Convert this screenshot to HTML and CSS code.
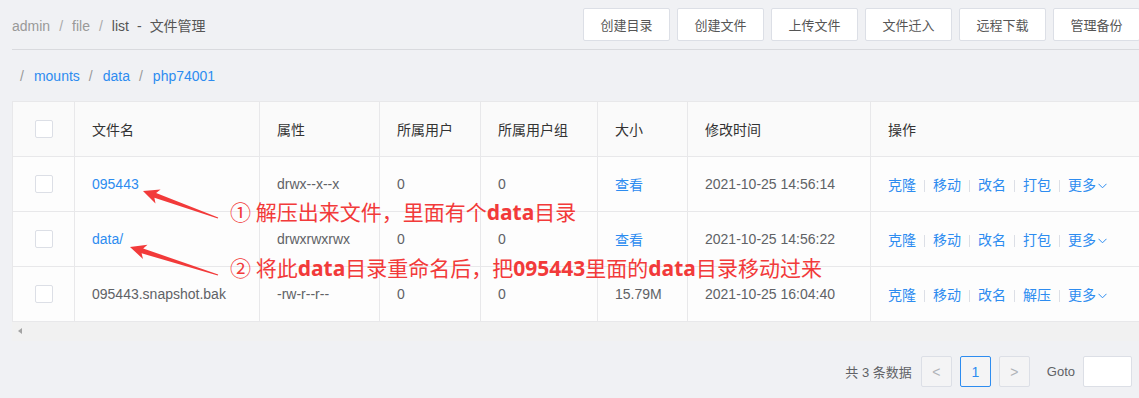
FILE: index.html
```html
<!DOCTYPE html>
<html lang="zh-CN">
<head>
  <meta charset="UTF-8" />
  <title>文件管理</title>
  <link rel="stylesheet" href="styles.css">
</head>
<body>
<div class="page">

  <header class="topbar">
    <div class="crumbs">
      <span class="muted">admin</span><span class="sep">/</span>
      <span class="muted">file</span><span class="sep">/</span>
      <span>list</span><span class="dash">-</span><span>文件管理</span>
    </div>
    <div class="actions">
      <button>创建目录</button>
      <button>创建文件</button>
      <button>上传文件</button>
      <button>文件迁入</button>
      <button>远程下载</button>
      <button>管理备份</button>
    </div>
  </header>

  <nav class="path">
    <span class="sep">/</span><a>mounts</a>
    <span class="sep">/</span><a>data</a>
    <span class="sep">/</span><a>php74001</a>
  </nav>

  <div class="table-wrap">
    <table class="files">
      <colgroup>
        <col style="width:62px"><col style="width:185px"><col style="width:120px"><col style="width:101px">
        <col style="width:117px"><col style="width:90px"><col style="width:183px"><col style="width:330px">
      </colgroup>
      <thead>
        <tr>
          <th class="chk"><span class="box"></span></th>
          <th>文件名</th><th>属性</th><th>所属用户</th><th>所属用户组</th>
          <th>大小</th><th>修改时间</th><th>操作</th>
        </tr>
      </thead>
      <tbody>
        <tr>
          <td class="chk"><span class="box"></span></td>
          <td><a>095443</a></td><td>drwx--x--x</td><td>0</td><td>0</td>
          <td><a>查看</a></td><td>2021-10-25 14:56:14</td>
          <td class="ops"><a>克隆</a><i></i><a>移动</a><i></i><a>改名</a><i></i><a>打包</a><i></i><a class="more">更多<svg width="9" height="6" viewBox="0 0 9 6"><polyline points="0.5,0.8 4.5,4.8 8.5,0.8" fill="none" stroke="#2d8cf0" stroke-width="1"/></svg></a></td>
        </tr>
        <tr>
          <td class="chk"><span class="box"></span></td>
          <td><a>data/</a></td><td>drwxrwxrwx</td><td>0</td><td>0</td>
          <td><a>查看</a></td><td>2021-10-25 14:56:22</td>
          <td class="ops"><a>克隆</a><i></i><a>移动</a><i></i><a>改名</a><i></i><a>打包</a><i></i><a class="more">更多<svg width="9" height="6" viewBox="0 0 9 6"><polyline points="0.5,0.8 4.5,4.8 8.5,0.8" fill="none" stroke="#2d8cf0" stroke-width="1"/></svg></a></td>
        </tr>
        <tr>
          <td class="chk"><span class="box"></span></td>
          <td>095443.snapshot.bak</td><td>-rw-r--r--</td><td>0</td><td>0</td>
          <td>15.79M</td><td>2021-10-25 16:04:40</td>
          <td class="ops"><a>克隆</a><i></i><a>移动</a><i></i><a>改名</a><i></i><a>解压</a><i></i><a class="more">更多<svg width="9" height="6" viewBox="0 0 9 6"><polyline points="0.5,0.8 4.5,4.8 8.5,0.8" fill="none" stroke="#2d8cf0" stroke-width="1"/></svg></a></td>
        </tr>
      </tbody>
    </table>
    <div class="hscroll"><span class="tri"></span></div>
  </div>

  <div class="pager">
    <span class="total">共 3 条数据</span>
    <button class="pg">&lt;</button>
    <button class="pg current">1</button>
    <button class="pg">&gt;</button>
    <span class="goto">Goto</span>
    <input class="goto-input" type="text">
  </div>

  <!-- annotations drawn over the table -->
  <svg class="arrows" width="1139" height="398" viewBox="0 0 1139 398">
    <polygon points="143,191 160.6,189.4 156.1,193.1 218.2,217.4 217.8,218.6 154.4,197.8 155.5,203.5" fill="#f23a3a"/>
    <polygon points="130,247 147.5,244.7 143.2,248.5 218.2,274.4 217.8,275.6 141.6,253.3 143,259" fill="#f23a3a"/>
  </svg>
  <div class="note note-1">① 解压出来文件，里面有个<b>data</b>目录</div>
  <div class="note note-2">② 将此<b>data</b>目录重命名后，把<b>095443</b>里面的<b>data</b>目录移动过来</div>

</div>
</body>
</html>
```

FILE: styles.css
```css
html, body { margin: 0; background: #f0f1f4; overflow: hidden; }
body { font-family: "Liberation Sans", "Noto Sans CJK SC", sans-serif; font-size: 14px; color: #606266; }
.page { position: relative; width: 1139px; height: 398px; }

.topbar { display: flex; justify-content: space-between; align-items: center; height: 49px; margin-left: 12px; border-bottom: 1px solid #d9dade; }
.crumbs { display: flex; align-items: baseline; color: #555; }
.crumbs .muted { color: #999; }
.crumbs .sep { color: #aaa; margin: 0 9px; }
.crumbs .dash { margin: 0 8px; }
.actions { display: flex; gap: 7px; margin-right: -1px; }
.actions button { width: 87px; height: 33px; background: #fff; border: 1px solid #dcdfe6; border-radius: 2px; font: 13px "Noto Sans CJK SC", sans-serif; color: #555; padding: 0; }

.path { display: flex; height: 51px; align-items: center; padding-left: 20px; }
.path .sep { color: #999; margin-right: 10px; }
.path a { color: #2d8cf0; margin-right: 9px; }

.table-wrap { margin-left: 12px; width: 1127px; overflow: hidden; background: #fdfdfd; }
.files { border-collapse: collapse; table-layout: fixed; width: 1188px; }
.files th, .files td { height: 55px; padding: 0 17px; text-align: left; border: 1px solid #e8e8ea; white-space: nowrap; box-sizing: border-box; }
.files th { background: #fafafa; color: #333; font-weight: normal; }
.files td { background: #fdfdfd; }
.files a { color: #2d8cf0; }
.files .chk { padding: 0; text-align: center; }
.box { display: inline-block; width: 16px; height: 16px; border: 1px solid #dcdfe6; border-radius: 2px; background: #fff; vertical-align: middle; }
.ops i { display: inline-block; width: 1px; height: 12px; background: #dcdfe6; margin: 0 8px; vertical-align: middle; }
.ops .more svg { margin-left: 2px; vertical-align: middle; }

.hscroll { height: 19px; background: #f1f1f1; position: relative; }
.hscroll .tri { position: absolute; left: 6px; top: 6px; border-style: solid; border-width: 3.5px 4px 3.5px 0; border-color: transparent #a3a3a3 transparent transparent; }

.pager { display: flex; justify-content: flex-end; align-items: center; margin-top: 15px; padding-right: 7px; font-size: 13px; }
.total { margin-right: 9px; }
.pg { width: 31px; height: 31px; margin-left: 8px; background: #f4f4f5; border: 1px solid #dcdfe6; border-radius: 2px; color: #b0b3b8; font: 14px "Liberation Sans", sans-serif; padding: 0; }
.pg:first-of-type { margin-left: 0; }
.pg.current { border-color: #2d8cf0; color: #2d8cf0; }
.goto { margin-left: 17px; color: #606266; }
.goto-input { width: 49px; height: 31px; margin-left: 8px; border: 1px solid #dcdfe6; border-radius: 2px; background: #fff; box-sizing: border-box; }

.arrows { position: absolute; left: 0; top: 0; pointer-events: none; }
.note { position: absolute; left: 230px; font: 21px/24px "Noto Sans CJK SC", sans-serif; color: #f23a3a; white-space: nowrap; }
.note b { font-family: "Noto Sans", sans-serif; font-weight: bold; }
.note-1 { top: 199px; }
.note-2 { top: 255px; }
```
